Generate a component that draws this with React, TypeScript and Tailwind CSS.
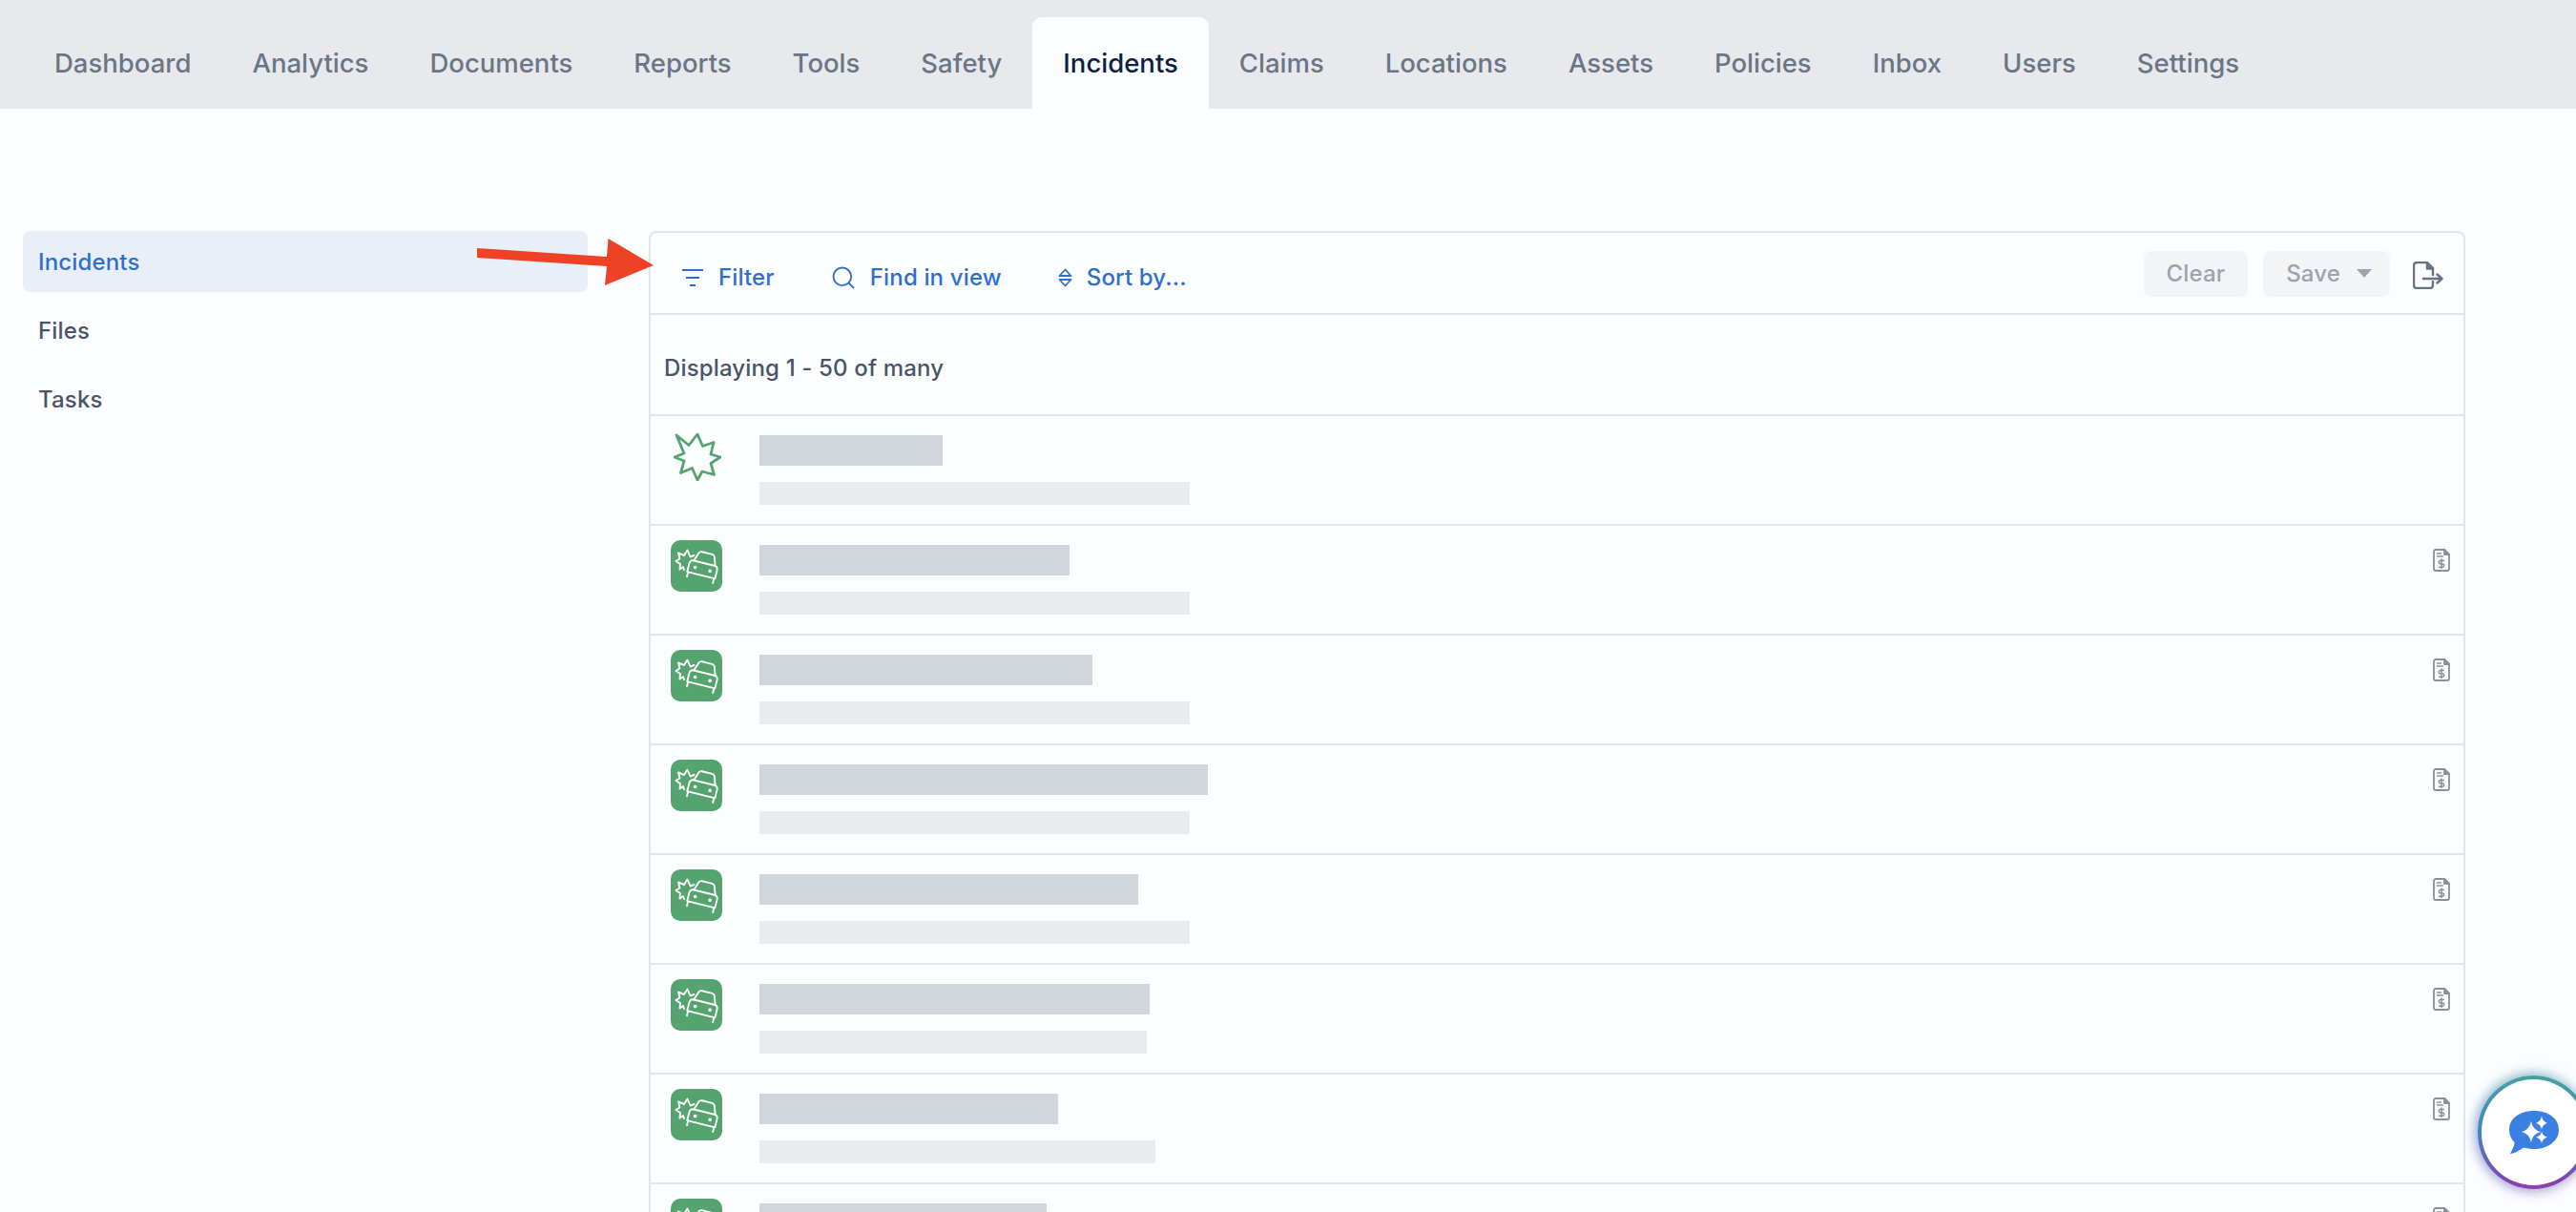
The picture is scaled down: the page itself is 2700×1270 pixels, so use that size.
import React from 'react';
import { Search } from 'lucide-react';

const tabs = ['Dashboard', 'Analytics', 'Documents', 'Reports', 'Tools', 'Safety', 'Incidents', 'Claims', 'Locations', 'Assets', 'Policies', 'Inbox', 'Users', 'Settings'];

const rows = [
  { title: 192, sub: 451, first: true },
  { title: 325, sub: 451 },
  { title: 349, sub: 451 },
  { title: 470, sub: 451 },
  { title: 397, sub: 451 },
  { title: 409, sub: 406 },
  { title: 313, sub: 415 },
  { title: 301, sub: 415 },
];

const FilterIcon = () => (
  <svg width="22" height="18" viewBox="0 0 22 18" fill="none" stroke="currentColor" strokeWidth="2">
    <path d="M0 1h22M4 9h14M8 17h6" />
  </svg>
);

const SortIcon = () => (
  <svg width="17" height="20" viewBox="0 0 17 20" fill="none" stroke="currentColor" strokeWidth="1.800" strokeLinejoin="round">
    <path d="M2.500 8L8.500 1.500 14.500 8zM2.500 12h12L8.500 18.500z" />
  </svg>
);

const ExportIcon = () => (
  <svg width="32" height="29" viewBox="0 0 32 29" fill="none" stroke="#667385" strokeWidth="2.400" strokeLinejoin="round" strokeLinecap="round">
    <path d="M21 14V7l-6-6H4a3 3 0 0 0-3 3v21a3 3 0 0 0 3 3h14a3 3 0 0 0 3-3v-4" />
    <path d="M15 1.500v6h6" fill="#667385" />
    <path d="M11 18h19M25.500 13.500L30.500 18l-5 4.500" />
  </svg>
);

const BurstOutline = () => (
  <svg width="50" height="50" viewBox="0 0 50 50" fill="none" stroke="#55a46f" strokeWidth="2.800" strokeLinejoin="round">
    <path d="M3 2L16 12.500 25 1l5.500 12.500L42 9.500l-3 12.500 10 3-10 6.500 3.500 12-12.500-3.500L25 49l-5.500-12.500-12 5 3.500-12.500L1 25l10-4z" />
  </svg>
);

const CrashIcon = () => (
  <div className="flex h-[54px] w-[54px] items-center justify-center rounded-[10px] bg-[#55a46f]">
    <svg width="54" height="54" viewBox="0 0 54 54" fill="none" stroke="#fff" strokeWidth="1.900" strokeLinejoin="round" strokeLinecap="round">
      <path d="M24.500 16L20.500 17.500 17.500 10.500 14 16 8 13.500 9.500 19.500 5.500 22 10 25 9.500 30.500 13 28 14 31" />
      <g transform="translate(34 28) rotate(14)">
        <path d="M-11-4l3-9q1-2 3-2H6q2 0 3 2l3 9" />
        <path d="M-15 9v-9q0-4 4-4h22q4 0 4 4v9z" />
        <path d="M-14 9v5M14 9v5" />
        <circle cx="-8" cy="2.500" r="1.800" fill="#fff" stroke="none" />
        <circle cx="8" cy="2.500" r="1.800" fill="#fff" stroke="none" />
      </g>
    </svg>
  </div>
);

const DocDollarIcon = () => (
  <svg width="18" height="24" viewBox="0 0 18 24" fill="none" stroke="#8a9099" strokeWidth="1.800" strokeLinejoin="round">
    <path d="M12 1H3a2 2 0 0 0-2 2v18a2 2 0 0 0 2 2h12a2 2 0 0 0 2-2V6z" />
    <path d="M12 1v5h5z" fill="#8a9099" />
    <path d="M4 5h5M4 8h7" strokeWidth="1.300" />
    <path d="M12 12.500H8a1.700 1.700 0 0 0 0 3.400h2a1.700 1.700 0 0 1 0 3.400H6M9 10.500v10.500" strokeWidth="1.500" />
  </svg>
);

const ChatIcon = () => (
  <svg width="52" height="46" viewBox="0 0 52 46" fill="none">
    <path d="M26 0C40 0 52 7 52 20C52 32 40 40 26 40C22 40 18 39.400 15 38.500C10 42 5 45 1 45C3 41 5.500 37 5.500 33C2 29.500 0 25 0 20C0 7 12 0 26 0Z" fill="#3a80e3" />
    <path d="M23 11Q24.500 20 33 22Q24.500 24 23 33Q21 24 13 22Q21 20 23 11Z" fill="#fff" />
    <path d="M34 5.500Q35 11 40 13Q35 14 34 19.500Q33 14 28 13Q33 11 34 5.500Z" fill="#fff" />
    <path d="M34 21.500Q35 26.500 40 27.500Q35 29 34 34Q33 29 28 27.500Q33 26.500 34 21.500Z" fill="#fff" />
  </svg>
);

export default function App() {
  return (
    <div className="relative h-screen w-full overflow-hidden bg-[#fcfdff] font-[Inter,sans-serif] font-medium text-[24px]">
      {/* Top tabs */}
      <nav className="flex h-[114px] items-end bg-[#e8e9ec] pl-[25px]">
        {tabs.map((tab) => (
          <a
            key={tab}
            className={`flex h-[96px] items-center px-[32px] pt-[1px] text-[27.5px] ${
              tab === 'Incidents' ? 'rounded-t-[10px] bg-[#fcfdff] text-[#0d1f45]' : 'text-[#6a7686]'
            }`}
          >
            {tab}
          </a>
        ))}
      </nav>

      <div className="flex gap-[64px] pl-[24px] pt-[128px] tracking-[0.15px]">
        {/* Sidebar */}
        <aside className="flex w-[592px] flex-col gap-[8px]">
          <a className="flex h-[64px] items-center rounded-[8px] bg-[#e9eff9] px-[16px] pt-[2px] text-[#2f6fcb]">Incidents</a>
          <a className="flex h-[64px] items-center px-[16px] pt-[2px] text-[#475569]">Files</a>
          <a className="flex h-[64px] items-center px-[16px] pt-[2px] text-[#475569]">Tasks</a>
        </aside>

        {/* Results panel */}
        <section className="w-[1904px] rounded-t-[8px] border-2 border-b-0 border-[#e2e4e8]">
          <div className="flex h-[86px] items-center justify-between border-b-2 border-[#e2e4e8] pl-[33px] pr-[21px]">
            <div className="flex items-center gap-[58px] pt-[10px] text-[#2f6fcb]">
              <button className="flex items-center gap-[16px]">
                <FilterIcon />
                Filter
              </button>
              <button className="flex items-center gap-[14px]">
                <Search size={28} strokeWidth={1.6} />
                Find in view
              </button>
              <button className="flex items-center gap-[14px]">
                <SortIcon />
                Sort by...
              </button>
            </div>
            <div className="flex items-center gap-[16px] pt-[1px]">
              <button className="flex h-[48px] items-center rounded-[8px] bg-[#f3f4f6] px-[24px] text-[#9ca3af]">Clear</button>
              <button className="flex h-[48px] items-center gap-[17px] rounded-[8px] bg-[#f3f4f6] pl-[24px] pr-[19px] text-[#9ca3af]">
                Save
                <span className="h-0 w-0 border-x-[8px] border-t-[9px] border-x-transparent border-t-[#9ca3af]" />
              </button>
              <span className="ml-[8px] pt-[4px]">
                <ExportIcon />
              </span>
            </div>
          </div>

          <div className="flex h-[106px] items-center border-b-2 border-[#e2e4e8] pl-[14px] pt-[7px] text-[#475569]">
            Displaying 1 - 50 of many
          </div>

          {rows.map((row, i) => (
            <div key={i} className="flex h-[115px] border-b-2 border-[#e2e4e8] pl-[21px] pr-[14px]">
              <div className={`w-[93px] ${row.first ? 'pl-[3px] pt-[18px]' : 'pt-[15px]'}`}>
                {row.first ? <BurstOutline /> : <CrashIcon />}
              </div>
              <div className="flex flex-1 flex-col gap-[17px] pt-[20px]">
                <div className="h-[32px] bg-[#d1d5dc]" style={{ width: row.title }} />
                <div className="h-[24px] bg-[#e9ecef]" style={{ width: row.sub }} />
              </div>
              {!row.first && (
                <div className="pt-[24px]">
                  <DocDollarIcon />
                </div>
              )}
            </div>
          ))}
        </section>
      </div>

      {/* Assistant button */}
      <button className="absolute bottom-[24px] right-[-14px] h-[119px] w-[117px] rounded-full bg-[linear-gradient(180deg,#45a29e,#3f86c8_50%,#8d3ca9)] p-[4px] shadow-[0_-4px_12px_rgba(70,160,150,0.35),-4px_0_12px_rgba(60,120,220,0.25),0_4px_12px_rgba(140,60,170,0.3)]">
        <span className="flex h-full w-full items-center justify-center rounded-full bg-white">
          <ChatIcon />
        </span>
      </button>

      {/* Red annotation arrow */}
      <svg className="absolute left-[500px] top-[250px]" width="185" height="50" viewBox="0 0 185 50">
        <polygon points="0,10 136,19 137.500,0 185,28 134,49 136,29 0,20" fill="#ee4226" />
      </svg>
    </div>
  );
}
